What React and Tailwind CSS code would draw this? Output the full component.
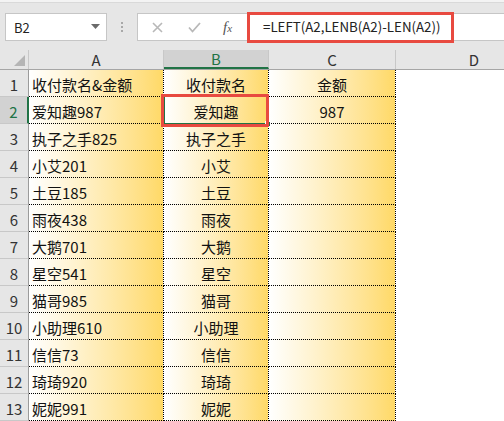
import React from "react";

const rows = [
  ["收付款名&金额", "收付款名", "金额"],
  ["爱知趣987", "爱知趣", "987"],
  ["执子之手825", "执子之手", ""],
  ["小艾201", "小艾", ""],
  ["土豆185", "土豆", ""],
  ["雨夜438", "雨夜", ""],
  ["大鹅701", "大鹅", ""],
  ["星空541", "星空", ""],
  ["猫哥985", "猫哥", ""],
  ["小助理610", "小助理", ""],
  ["信信73", "信信", ""],
  ["琦琦920", "琦琦", ""],
  ["妮妮991", "妮妮", ""],
];

const font = { fontFamily: '"Noto Sans CJK SC", "Noto Sans", sans-serif' };

export default function App() {
  return (
    <div className="w-[504px] h-[421px] overflow-hidden bg-white relative" style={font}>
      {/* toolbar */}
      <div className="h-[50px] bg-[#e6e6e6] flex items-start relative border-t-[3px] border-[#f3f3f3]">
        <div className="absolute left-0 right-0 top-[-1px] h-px bg-[#d9d9d9]" />
        <div className="mt-[10px] ml-[5px] w-[102px] h-[28px] bg-white border border-[#c6c6c6] flex items-center justify-between pl-[8px] pr-[6px]">
          <span className="text-[13px] leading-none text-[#222]">B2</span>
          <svg width="9" height="6" viewBox="0 0 9 6"><path d="M0 0 L9 0 L4.5 5 Z" fill="#6a6a6a" /></svg>
        </div>
        <div className="mt-[19px] ml-[14px] w-[3px] flex flex-col gap-[2px]">
          <div className="w-[2px] h-[2px] bg-[#a8a8a8]" />
          <div className="w-[2px] h-[2px] bg-[#a8a8a8]" />
          <div className="w-[2px] h-[2px] bg-[#a8a8a8]" />
        </div>
        <div className="mt-[10px] ml-[13px] w-[111px] h-[28px] bg-white border border-[#c6c6c6] flex items-center">
          <svg className="ml-[14px]" width="11" height="11" viewBox="0 0 11 11">
            <path d="M1 1 L10 10 M10 1 L1 10" stroke="#b8b8b8" strokeWidth="1.6" />
          </svg>
          <svg className="ml-[25px]" width="13" height="11" viewBox="0 0 13 11">
            <path d="M1 5.5 L4.5 9.5 L12 1" stroke="#b8b8b8" strokeWidth="1.8" fill="none" />
          </svg>
          <span
            className="ml-[22px] text-[15px] italic leading-none text-[#555]"
            style={{ fontFamily: '"Liberation Serif", serif' }}
          >
            f<span className="text-[11px]">x</span>
          </span>
        </div>
        <div className="mt-[10px] flex-1 h-[28px] bg-white border-y border-[#c6c6c6] flex items-center pl-[15px]">
          <span className="text-[13.3px] leading-none text-[#222]">=LEFT(A2,LENB(A2)-LEN(A2))</span>
        </div>
        <div className="absolute left-[247px] top-[9px] w-[207px] h-[31px] border-[3px] border-[#e84a40]" />
      </div>

      {/* column header */}
      <div className="flex h-[20px] bg-[#e6e6e6] border-b border-[#a6a6a6]">
        <div className="w-[29px] border-r border-[#c8c8c8] relative">
          <svg className="absolute right-[3px] bottom-[3px]" width="11" height="11" viewBox="0 0 11 11">
            <path d="M11 0 L11 11 L0 11 Z" fill="#b5b5b5" />
          </svg>
        </div>
        <div className="w-[135px] border-r border-[#c8c8c8] flex items-center justify-center text-[15px] leading-none text-[#333]">A</div>
        <div className="w-[105px] bg-[#d2d2d2] border-r border-[#c8c8c8] border-b-2 border-b-[#217346] flex items-center justify-center text-[15px] leading-none text-[#217346]">B</div>
        <div className="w-[127px] border-r border-[#c8c8c8] flex items-center justify-center text-[15px] leading-none text-[#333]">C</div>
        <div className="flex-1 flex items-center justify-center text-[15px] leading-none text-[#333] pl-[48px]">D</div>
      </div>

      {/* rows */}
      <div className="relative">
        {rows.map((r, i) => {
          const sel = i === 1;
          return (
            <div key={i} className="flex h-[27px]">
              <div
                className={
                  sel
                    ? "w-[29px] bg-[#d2d2d2] border-b border-[#c8c8c8] border-r-2 border-r-[#217346] flex items-end justify-center pb-[1px] text-[15px] leading-[20px] text-[#217346]"
                    : "w-[29px] bg-[#e6e6e6] border-b border-[#c8c8c8] border-r border-r-[#9b9b9b] flex items-end justify-center pb-[1px] text-[15px] leading-[20px] text-[#333]"
                }
              >
                {i + 1}
              </div>
              <div className="w-[135px] bg-linear-to-r from-white to-[#ffd966] border-r border-b border-dotted border-black flex items-end pl-[3px] pb-[1px] text-[15px] leading-[20px] text-[#111] whitespace-nowrap">
                {r[0]}
              </div>
              <div className="w-[105px] bg-linear-to-r from-white to-[#ffd966] border-r border-b border-dotted border-black flex items-end justify-center pb-[1px] text-[15px] leading-[20px] text-[#111] whitespace-nowrap">
                {r[1]}
              </div>
              <div className="w-[127px] bg-linear-to-r from-white to-[#ffd966] border-r border-b border-dotted border-black flex items-end justify-center pb-[1px] text-[15px] leading-[20px] text-[#111] whitespace-nowrap">
                {r[2]}
              </div>
              <div className="flex-1" />
            </div>
          );
        })}
        {/* selection on B2 */}
        <div className="absolute left-[163px] top-[25px] w-[106px] h-[30px] border-2 border-[#217346]" />
        <div className="absolute left-[265px] top-[51px] w-[6px] h-[6px] bg-[#217346] border border-white" />
        <div className="absolute left-[161px] top-[24px] w-[108px] h-[33px] border-[3px] border-[#e84a40]" />
      </div>
    </div>
  );
}
